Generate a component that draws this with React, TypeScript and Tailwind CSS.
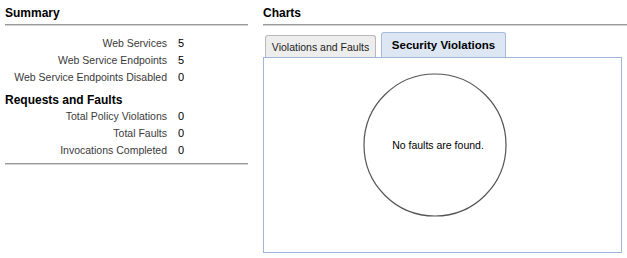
import React from "react";

const font = { fontFamily: '"Liberation Sans", Arial, sans-serif' };

function Rule() {
  return (
    <div className="flex flex-col">
      <div className="h-[1px] bg-[#9a9a9a]" />
      <div className="h-[1px] bg-[#d4d4d4]" />
    </div>
  );
}

function Row({ label, value }: { label: string; value: string }) {
  return (
    <div className="flex h-[17px] items-center">
      <div className="w-[162px] text-right text-[10.5px] text-[#3a3a3a]">{label}</div>
      <div className="ml-[11px] text-black">{value}</div>
    </div>
  );
}

export default function App() {
  return (
    <div
      className="flex w-[627px] h-[258px] bg-white text-[11px] leading-[14px] text-black overflow-hidden"
      style={font}
    >
      <div className="ml-[5px] w-[243px] flex flex-col">
        <div className="pt-[6px] font-bold text-[12px] leading-[14px]">Summary</div>
        <div className="mt-[4px]">
          <Rule />
        </div>
        <div className="mt-[8px]">
          <Row label="Web Services" value="5" />
          <Row label="Web Service Endpoints" value="5" />
          <Row label="Web Service Endpoints Disabled" value="0" />
        </div>
        <div className="mt-[8px] font-bold text-[12px] leading-[14px]">Requests and Faults</div>
        <div>
          <Row label="Total Policy Violations" value="0" />
          <Row label="Total Faults" value="0" />
          <Row label="Invocations Completed" value="0" />
        </div>
        <div className="mt-[5px]">
          <Rule />
        </div>
      </div>

      <div className="ml-[15px] flex-1 flex flex-col">
        <div className="pt-[6px] font-bold text-[12px] leading-[14px]">Charts</div>
        <div className="mt-[4px]">
          <Rule />
        </div>
        <div className="mt-[6px] flex items-end ml-[2px] h-[25px]">
          <div className="h-[22px] w-[111px] flex items-center justify-center rounded-t-[3px] border border-b-0 border-[#b8b8b8] bg-[#ededed] text-[10.5px] text-[#222]">
            Violations and Faults
          </div>
          <div className="ml-[5px] h-[25px] w-[125px] flex items-center justify-center rounded-t-[3px] border border-b-0 border-[#a6bcdc] bg-[#dce7f3] font-bold text-[11.5px]">
            Security Violations
          </div>
        </div>
        <div className="mr-[5px] h-[196px] border border-[#9fb6da] bg-white">
          <svg width="146" height="146" className="ml-[98px] mt-[14px] block">
            <circle cx="73" cy="73" r="71" fill="white" stroke="#555" strokeWidth="1.2" />
            <text
              x="76"
              y="77"
              textAnchor="middle"
              fontSize="10.5"
              fill="#000"
              style={font}
            >
              No faults are found.
            </text>
          </svg>
        </div>
      </div>
    </div>
  );
}
